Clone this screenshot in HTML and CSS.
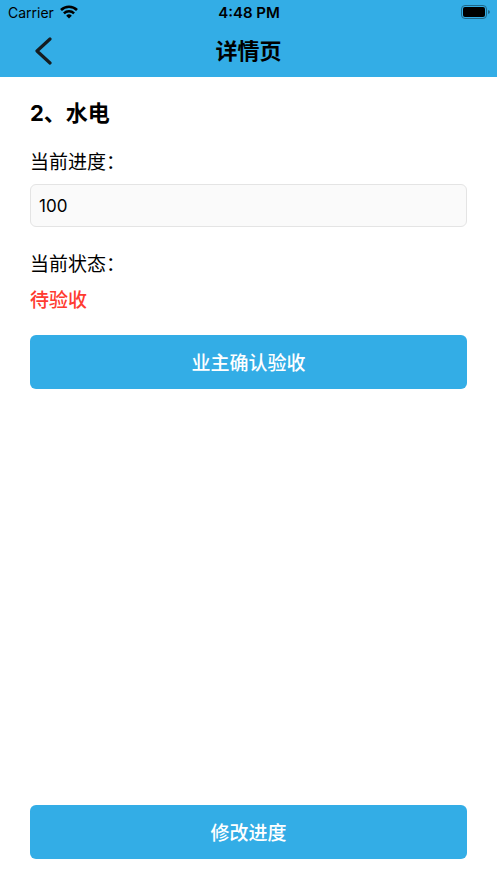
FILE: index.html
```html
<!DOCTYPE html>
<html lang="zh-CN">
<head>
<meta charset="utf-8">
<meta name="viewport" content="width=device-width, initial-scale=1">
<title>详情页</title>
<link rel="stylesheet" href="styles.css">
</head>
<body>
<header class="header">
  <div class="status">
    <div class="carrier">
      <span>Carrier</span>
      <svg class="wifi" viewBox="0 0 18 14" aria-hidden="true">
        <path d="M1 5a11.400 11.400 0 0 1 16 0" fill="none" stroke="#000" stroke-width="2.600"/>
        <path d="M3.900 8.300a7.200 7.200 0 0 1 10.200 0" fill="none" stroke="#000" stroke-width="2.400"/>
        <path d="M9 13.600 6.200 10.700a4 4 0 0 1 5.600 0Z"/>
      </svg>
    </div>
    <time class="clock">4:48 PM</time>
    <svg class="battery" viewBox="0 0 29 14" aria-hidden="true">
      <rect x=".5" y=".5" width="25" height="13" rx="3.5" fill="none" stroke="#1f688a"/>
      <rect x="2" y="2" width="22" height="10" rx="2"/>
      <path d="M27 5q2 .5 2 2t-2 2Z" fill="#1f688a"/>
    </svg>
  </div>
  <nav class="nav">
    <button class="back" type="button" aria-label="返回">
      <svg viewBox="0 0 18 28" aria-hidden="true"><path d="M16 2 3 14l13 12" fill="none" stroke="#161c20" stroke-width="3.2" stroke-linecap="round" stroke-linejoin="round"/></svg>
    </button>
    <h1 class="title">详情页</h1>
  </nav>
</header>
<main class="content">
  <h2 class="item">2、水电</h2>
  <label class="label" for="progress">当前进度：</label>
  <input class="field" id="progress" type="text" inputmode="numeric" value="100">
  <p class="label">当前状态：</p>
  <p class="state">待验收</p>
  <button class="button" type="button">业主确认验收</button>
  <button class="button button-bottom" type="button">修改进度</button>
</main>
</body>
</html>
```

FILE: styles.css
```css
* { box-sizing: border-box; }
body {
  display: flex;
  flex-direction: column;
  min-height: 100vh;
  margin: 0;
  background: #fff;
  color: #000;
  font-family: Inter, "Noto Sans CJK SC", sans-serif;
}
h1, h2, p { margin: 0; }
.header { background: #33ade6; }
.status {
  display: grid;
  grid-template-columns: 1fr auto 1fr;
  align-items: center;
  height: 24px;
  padding: 0 7px 0 8px;
  font-size: 14px;
}
.carrier { display: flex; align-items: center; gap: 6px; }
.wifi { width: 18px; height: 14px; }
.clock { font-size: 15px; font-weight: 600; }
.battery { width: 29px; height: 14px; justify-self: end; }
.nav {
  display: grid;
  grid-template-columns: 56px 1fr 56px;
  align-items: center;
  height: 53px;
}
.back {
  display: flex;
  justify-content: flex-end;
  padding: 0 4px;
  border: 0;
  background: none;
}
.back svg { width: 18px; height: 28px; }
.title { font-size: 22px; line-height: 32px; font-weight: 700; text-align: center; }
.content {
  display: flex;
  flex: 1;
  flex-direction: column;
  padding: 20px 30px 24px;
}
.item { margin-bottom: 18px; font-size: 22px; line-height: 32px; font-weight: 700; }
.label { font-size: 19px; line-height: 32px; }
.field {
  height: 43px;
  margin: 5px 0 22px;
  padding: 0 8px;
  border: 1px solid #e4e4e4;
  border-radius: 6px;
  background: #fafafa;
  color: #000;
  font: inherit;
  font-size: 17px;
}
.state { margin: 4px 0 18px; color: #ff3b30; font-size: 19px; line-height: 32px; font-weight: 500; }
.button {
  height: 54px;
  padding: 0 0 2px;
  border: 0;
  border-radius: 6px;
  background: #33ade6;
  color: #fff;
  font: inherit;
  font-size: 19px;
  font-weight: 500;
}
.button-bottom { margin-top: auto; }
```
